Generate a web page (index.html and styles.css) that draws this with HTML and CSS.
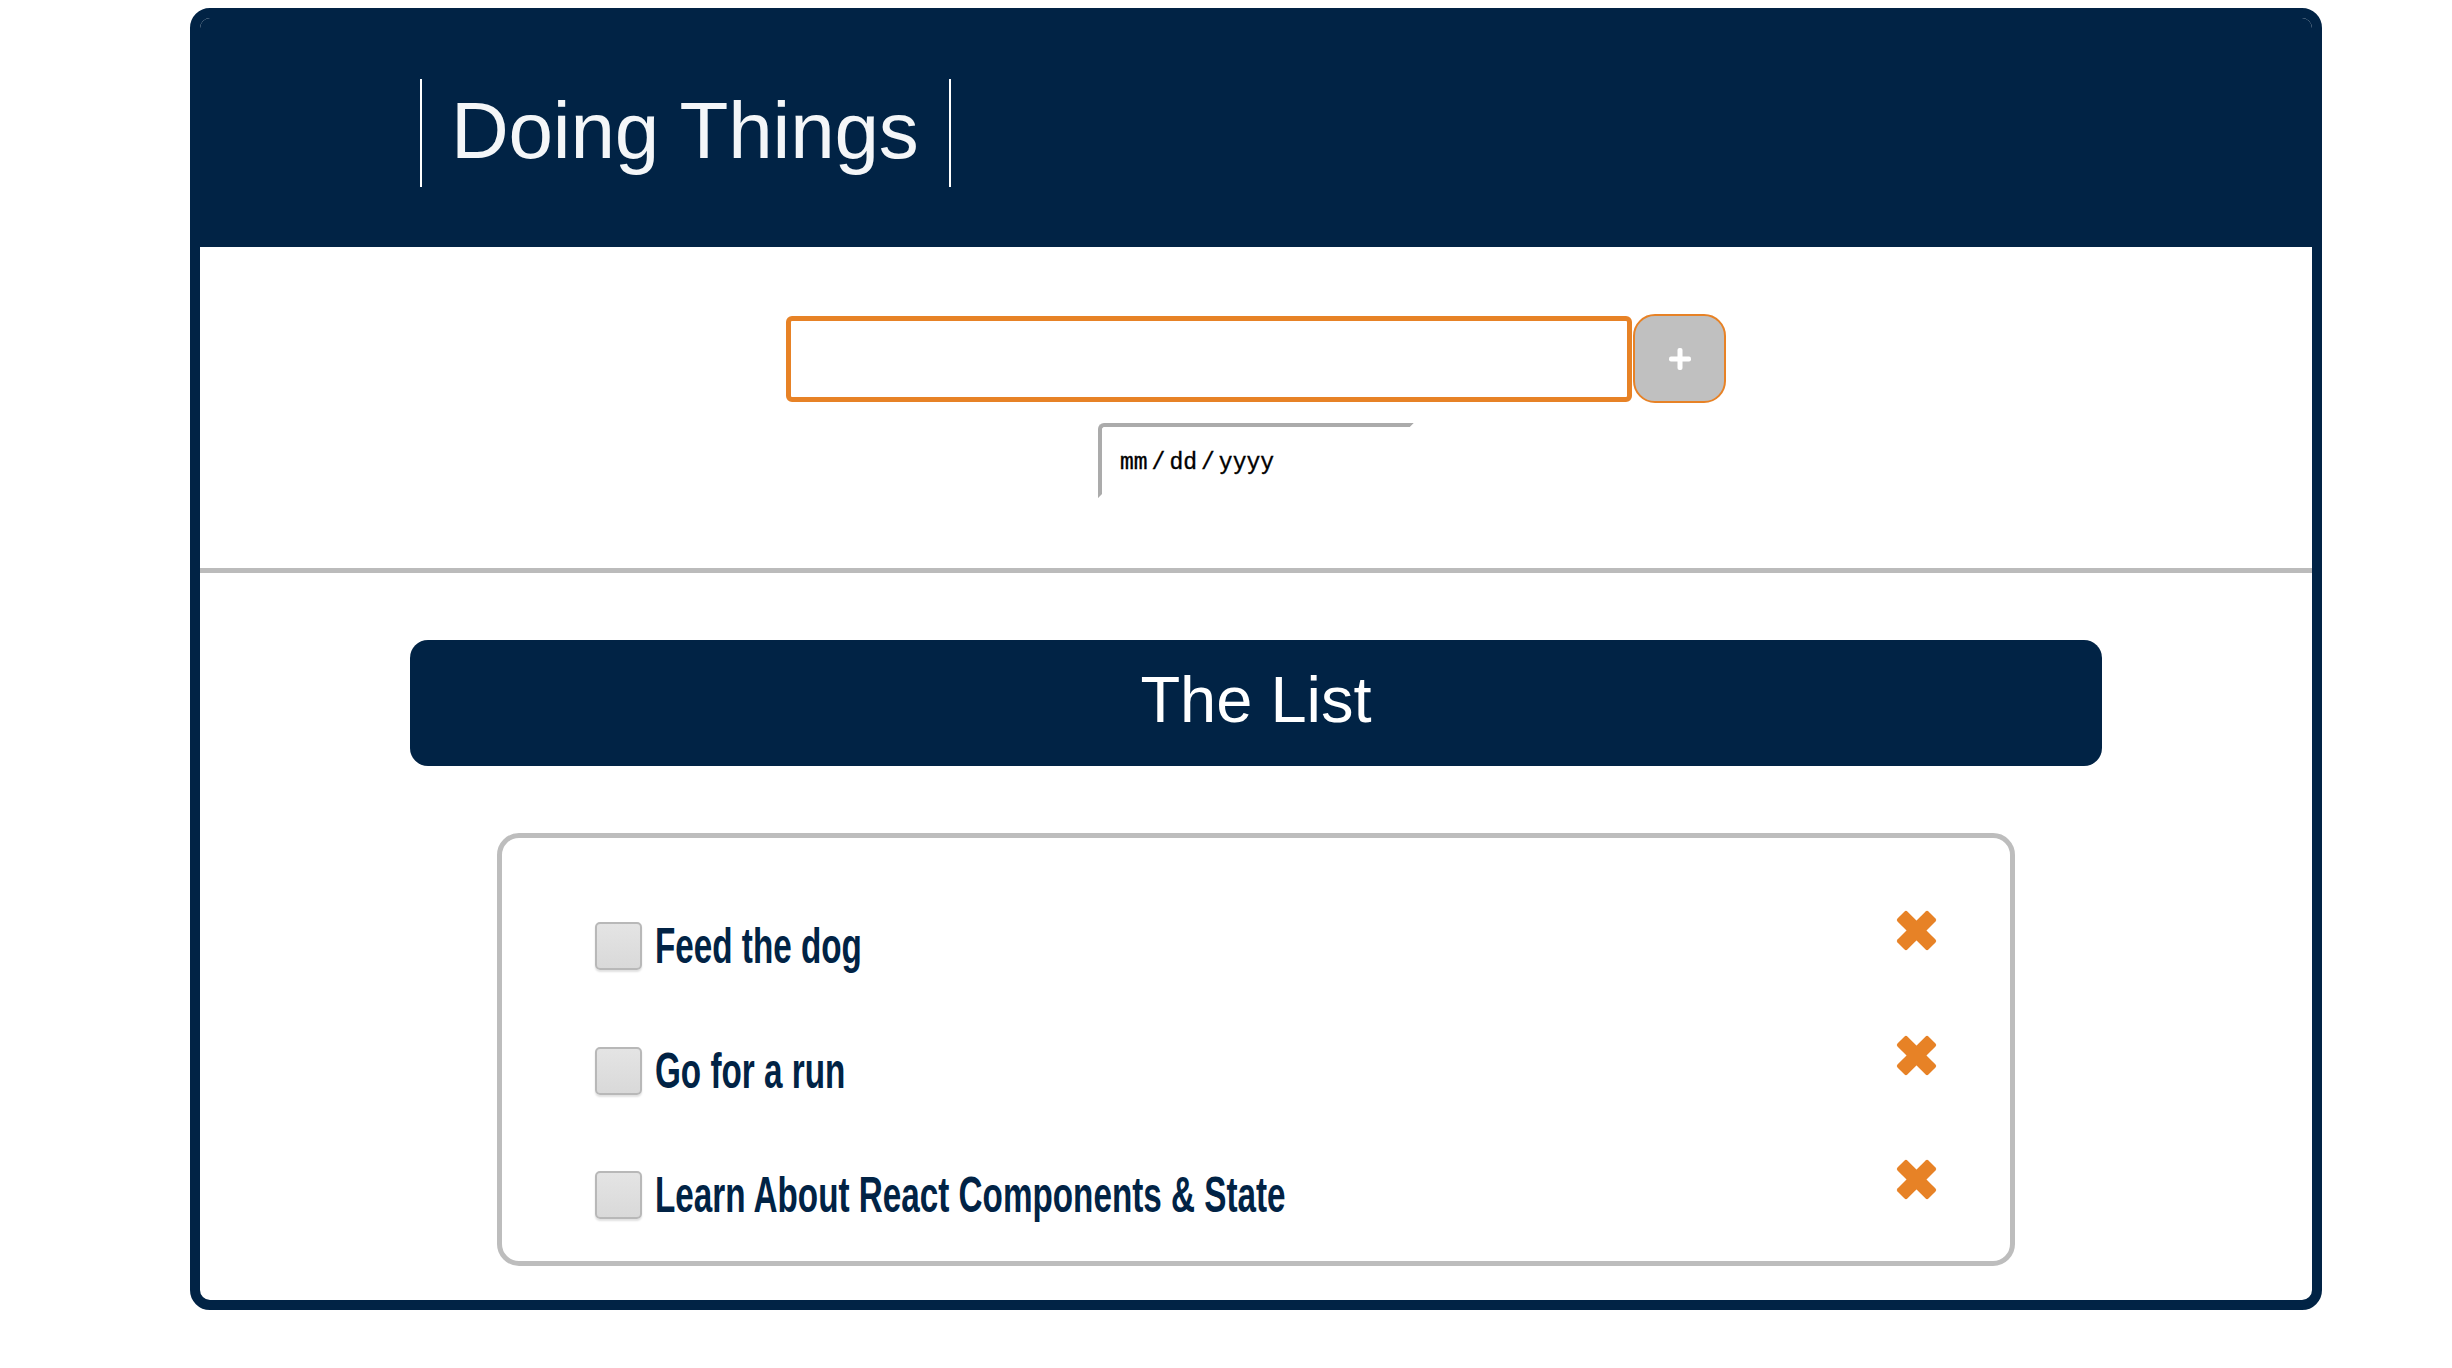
FILE: index.html
```html
<!DOCTYPE html>
<html lang="en">
<head>
<meta charset="utf-8">
<title>Doing Things</title>
<link rel="stylesheet" href="styles.css">
</head>
<body>
<div class="app">
  <header class="app-header">
    <h1 class="title">Doing Things</h1>
  </header>
  <section class="entry">
    <div class="entry-row">
      <input class="task-input" type="text" aria-label="New task">
      <button class="add-btn" type="button" aria-label="Add">
        <svg class="plus" viewBox="0 0 22 22" width="22" height="22"><rect x="8.5" y="0" width="5" height="22" rx="2"/><rect x="0" y="8.5" width="22" height="5" rx="2"/></svg>
      </button>
    </div>
    <div class="date-field"><span class="date-text">mm<span class="slash">/</span>dd<span class="slash">/</span>yyyy</span></div>
  </section>
  <div class="divider"></div>
  <section class="list-section">
    <h2 class="list-title">The List</h2>
    <ul class="list-box">
      <li class="item">
        <span class="check"></span>
        <span class="label">Feed the dog</span>
        <svg class="remove" viewBox="0 0 41 41" width="41" height="41"><g transform="rotate(45 20.5 20.5)"><rect x="-1.4" y="13.5" width="43.8" height="14" rx="2"/><rect x="13.5" y="-1.4" width="14" height="43.8" rx="2"/></g></svg>
      </li>
      <li class="item">
        <span class="check"></span>
        <span class="label">Go for a run</span>
        <svg class="remove" viewBox="0 0 41 41" width="41" height="41"><g transform="rotate(45 20.5 20.5)"><rect x="-1.4" y="13.5" width="43.8" height="14" rx="2"/><rect x="13.5" y="-1.4" width="14" height="43.8" rx="2"/></g></svg>
      </li>
      <li class="item">
        <span class="check"></span>
        <span class="label">Learn About React Components &amp; State</span>
        <svg class="remove" viewBox="0 0 41 41" width="41" height="41"><g transform="rotate(45 20.5 20.5)"><rect x="-1.4" y="13.5" width="43.8" height="14" rx="2"/><rect x="13.5" y="-1.4" width="14" height="43.8" rx="2"/></g></svg>
      </li>
    </ul>
  </section>
</div>
</body>
</html>
```
FILE: styles.css
```css
html, body {
  background: #ffffff;
}
body {
  margin: 8px;
  font-family: "Liberation Sans", Arial, sans-serif;
}
.app {
  box-sizing: border-box;
  width: 2132px;
  margin: 0 0 0 182px;
  border: 10px solid #012345;
  border-radius: 20px;
  overflow: hidden;
  background: #ffffff;
}
.app-header {
  background: #012345;
  height: 229px;
  display: flex;
  align-items: center;
  padding-left: 220px;
}
.title {
  margin: 0;
  height: 108px;
  line-height: 104px;
  padding: 0 30px 0 29px;
  border-left: 2px solid #ffffff;
  border-right: 2px solid #ffffff;
  color: #f4f6f8;
  font-family: "Liberation Sans", Arial, sans-serif;
  font-weight: 400;
  font-size: 80px;
  letter-spacing: -0.2px;
  white-space: nowrap;
}
.entry {
  height: 321px;
  box-sizing: border-box;
  padding-top: 67px;
  display: flex;
  flex-direction: column;
  align-items: center;
}
.entry-row {
  display: flex;
  align-items: center;
  gap: 1px;
  height: 89px;
}
.task-input {
  box-sizing: border-box;
  width: 846px;
  height: 86px;
  margin: 0;
  border: 5px solid #e78226;
  border-radius: 6px;
  background: #ffffff;
  outline: none;
}
.add-btn {
  box-sizing: border-box;
  width: 93px;
  height: 89px;
  margin: 0;
  padding: 0;
  background: #c0c0c0;
  border: 2px solid #e78226;
  border-radius: 22px;
  display: flex;
  align-items: center;
  justify-content: center;
}
.plus {
  fill: #ffffff;
  display: block;
}
.date-field {
  box-sizing: border-box;
  width: 316px;
  height: 75px;
  margin-top: 20px;
  border-style: solid;
  border-width: 4px;
  border-color: #ababab #ffffff #ffffff #ababab;
  border-radius: 6px 0 0 0;
  padding: 4px 0 0 18px;
  display: flex;
  align-items: center;
}
.date-text {
  font-family: "Liberation Mono", "Courier New", monospace;
  font-size: 23px;
  color: #000000;
  -webkit-text-stroke: 0.35px #000000;
  white-space: pre;
}
.slash {
  margin: 0 4px;
}
.divider {
  height: 5px;
  background: #bbbbbb;
}
.list-section {
  padding: 67px 0 34px;
  display: flex;
  flex-direction: column;
  align-items: center;
}
.list-title {
  box-sizing: border-box;
  width: 1692px;
  height: 126px;
  margin: 0;
  padding-bottom: 7px;
  line-height: 119px;
  background: #012345;
  border-radius: 18px;
  color: #ffffff;
  text-align: center;
  font-family: "Liberation Sans", Arial, sans-serif;
  font-weight: 400;
  font-size: 65px;
}
.list-box {
  box-sizing: border-box;
  width: 1518px;
  margin: 67px 0 0;
  padding: 84px 73px 42px 93px;
  list-style: none;
  border: 5px solid #bdbdbd;
  border-radius: 22px;
  display: flex;
  flex-direction: column;
  gap: 76.5px;
}
.item {
  display: flex;
  align-items: center;
  height: 48px;
}
.check {
  box-sizing: border-box;
  flex: none;
  width: 47px;
  height: 48px;
  border: 2px solid #b8b8b8;
  border-radius: 5px;
  background: linear-gradient(#e4e4e4, #d9d9d9);
  box-shadow: 0 2px 2px rgba(0, 0, 0, 0.12);
}
.label {
  display: inline-block;
  margin-left: 13px;
  font-family: "Liberation Sans", Arial, sans-serif;
  font-weight: 700;
  font-size: 50px;
  line-height: 1;
  color: #012345;
  white-space: nowrap;
  transform: scaleX(0.665);
  transform-origin: left center;
}
.remove {
  flex: none;
  margin-left: auto;
  align-self: flex-start;
  margin-top: -12px;
  fill: #e78226;
}
```
